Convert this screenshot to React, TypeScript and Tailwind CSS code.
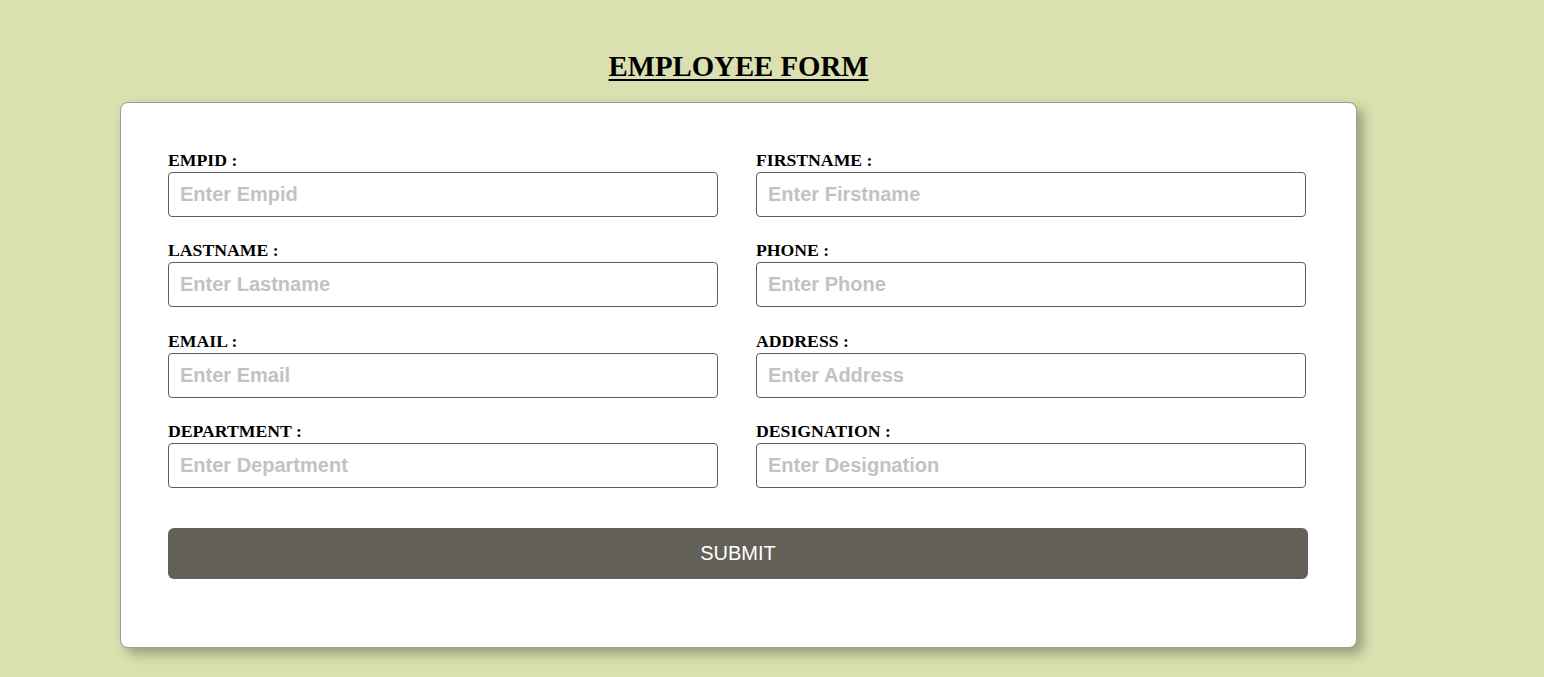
import React from "react";

const fields: [string, string][] = [
  ["EMPID", "Empid"],
  ["FIRSTNAME", "Firstname"],
  ["LASTNAME", "Lastname"],
  ["PHONE", "Phone"],
  ["EMAIL", "Email"],
  ["ADDRESS", "Address"],
  ["DEPARTMENT", "Department"],
  ["DESIGNATION", "Designation"],
];

export default function App() {
  return (
    <div className="min-h-[677px] w-full bg-[#dbe0b0] pt-[49px] pb-[20px]">
      <div className="ml-[120px] w-[1237px]">
        <h1 className="text-center font-['Liberation_Serif',serif] text-[28.8px] font-bold leading-[34px] text-black underline decoration-[2px] underline-offset-[3px]">
          EMPLOYEE FORM
        </h1>
        <form
          className="mt-[19px] rounded-[8px] border border-[#9c9c9c] bg-white px-[47px] pt-[49px] pb-[68px] shadow-[6px_6px_12px_rgba(0,0,0,0.3)]"
          onSubmit={(e) => e.preventDefault()}
        >
          <div className="grid grid-cols-[550px_550px] gap-x-[38px] gap-y-[25.33px]">
            {fields.map(([label, ph]) => (
              <div key={label} className="flex flex-col">
                <label className="mb-[4px] font-['Liberation_Serif',serif] text-[17.7px] font-bold leading-[16px] text-black">
                  {label} :
                </label>
                <input
                  type="text"
                  placeholder={`Enter ${ph}`}
                  className="h-[45px] w-full rounded-[4px] border border-[#5c5c5c] px-[11px] font-['Liberation_Sans',Arial,sans-serif] text-[20px] font-bold text-black outline-none placeholder:text-[#c3c2c2]"
                />
              </div>
            ))}
          </div>
          <button
            type="submit"
            className="mt-[40px] h-[51px] w-[1140px] rounded-[6px] bg-[#636058] font-['Liberation_Sans',Arial,sans-serif] text-[20px] text-white"
          >
            SUBMIT
          </button>
        </form>
      </div>
    </div>
  );
}
